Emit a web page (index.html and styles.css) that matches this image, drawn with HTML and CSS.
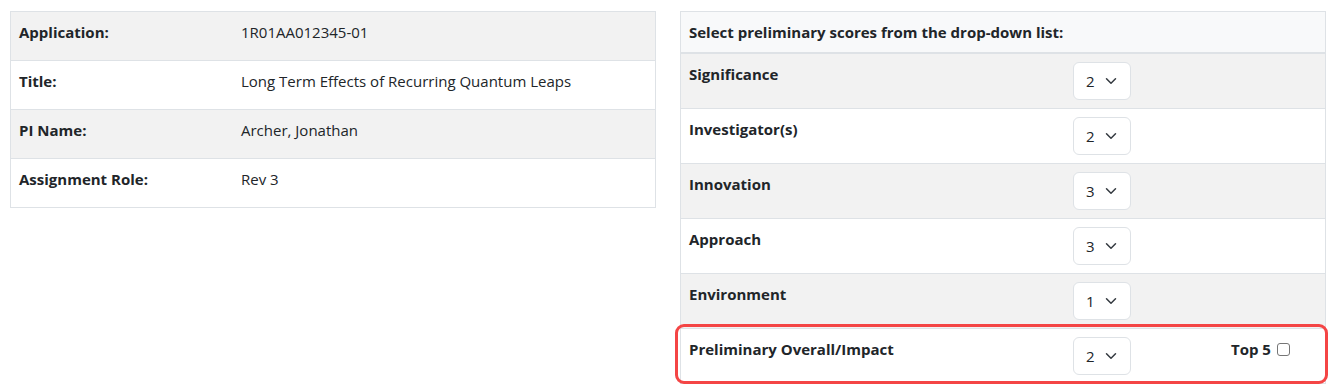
FILE: index.html
```html
<!DOCTYPE html>
<html lang="en">
<head>
<meta charset="utf-8">
<title>Preliminary Scores</title>
<link rel="stylesheet" href="styles.css">
</head>
<body>
<div class="page">
  <section class="info">
    <div class="info-row"><div class="info-label">Application:</div><div class="info-value">1R01AA012345-01</div></div>
    <div class="info-row"><div class="info-label">Title:</div><div class="info-value">Long Term Effects of Recurring Quantum Leaps</div></div>
    <div class="info-row"><div class="info-label">PI Name:</div><div class="info-value">Archer, Jonathan</div></div>
    <div class="info-row"><div class="info-label">Assignment Role:</div><div class="info-value">Rev 3</div></div>
  </section>

  <section class="scores">
    <div class="scores-head">Select preliminary scores from the drop-down list:</div>

    <div class="score-row">
      <div class="score-label">Significance</div>
      <div class="score-cell"><div class="select"><span>2</span><svg class="chev" viewBox="0 0 16 16"><path d="M2 5l6 6 6-6"/></svg></div></div>
      <div class="score-extra"></div>
    </div>

    <div class="score-row">
      <div class="score-label">Investigator(s)</div>
      <div class="score-cell"><div class="select"><span>2</span><svg class="chev" viewBox="0 0 16 16"><path d="M2 5l6 6 6-6"/></svg></div></div>
      <div class="score-extra"></div>
    </div>

    <div class="score-row">
      <div class="score-label">Innovation</div>
      <div class="score-cell"><div class="select"><span>3</span><svg class="chev" viewBox="0 0 16 16"><path d="M2 5l6 6 6-6"/></svg></div></div>
      <div class="score-extra"></div>
    </div>

    <div class="score-row">
      <div class="score-label">Approach</div>
      <div class="score-cell"><div class="select"><span>3</span><svg class="chev" viewBox="0 0 16 16"><path d="M2 5l6 6 6-6"/></svg></div></div>
      <div class="score-extra"></div>
    </div>

    <div class="score-row">
      <div class="score-label">Environment</div>
      <div class="score-cell"><div class="select"><span>1</span><svg class="chev" viewBox="0 0 16 16"><path d="M2 5l6 6 6-6"/></svg></div></div>
      <div class="score-extra"></div>
    </div>

    <div class="score-row overall">
      <div class="score-label">Preliminary Overall/Impact</div>
      <div class="score-cell"><div class="select"><span>2</span><svg class="chev" viewBox="0 0 16 16"><path d="M2 5l6 6 6-6"/></svg></div></div>
      <div class="score-extra"><label class="top5">Top 5<span class="checkbox"></span></label></div>
      <span class="highlight"></span>
    </div>
  </section>
</div>
</body>
</html>
```

FILE: styles.css
```css
html, body {
  margin: 0;
  padding: 0;
  background: #ffffff;
}

body {
  font-family: "Open Sans", "Noto Sans", "Liberation Sans", sans-serif;
  font-size: 15px;
  line-height: 24px;
  color: #212529;
}

.page {
  display: flex;
  align-items: flex-start;
  gap: 24px;
  padding: 11px 10px 0 10px;
}

.info,
.scores {
  flex: 0 0 646px;
  box-sizing: border-box;
  border: 1px solid #dee2e6;
}

/* left info table */
.info-row {
  display: grid;
  grid-template-columns: 222px 1fr;
  border-top: 1px solid #dee2e6;
}

.info-row:first-child {
  border-top: 0;
}

.info-row:nth-child(odd) {
  background: #f2f2f2;
}

.info-label,
.info-value {
  padding: 8px 8px 16px 8px;
}

.info-label {
  font-weight: 700;
}

/* right scores table */
.scores-head {
  padding: 8px;
  font-weight: 700;
  background: #f8f9fa;
  border-bottom: 2px solid #dee2e6;
}

.score-row {
  display: grid;
  grid-template-columns: 384px 158px 1fr;
  border-top: 1px solid #dee2e6;
  background: #ffffff;
}

.scores-head + .score-row {
  border-top: 0;
}

.score-row:nth-child(even) {
  background: #f2f2f2;
}

.score-label,
.score-cell,
.score-extra {
  padding: 8px;
}

.score-label {
  font-weight: 700;
}

.select {
  box-sizing: border-box;
  width: 58px;
  height: 38px;
  display: flex;
  align-items: center;
  justify-content: space-between;
  padding: 0 13px 0 12px;
  background: #ffffff;
  border: 1px solid #dee2e6;
  border-radius: 6px;
  color: #212529;
}

.chev {
  width: 12px;
  height: 12px;
  fill: none;
  stroke: #343a40;
  stroke-width: 2;
  stroke-linecap: round;
  stroke-linejoin: round;
}

.top5 {
  font-weight: 700;
  white-space: nowrap;
}

.checkbox {
  display: inline-block;
  box-sizing: border-box;
  width: 13px;
  height: 13px;
  margin-left: 6px;
  vertical-align: -1px;
  border: 1px solid #767676;
  border-radius: 3px;
  background: #ffffff;
}

.overall {
  position: relative;
}

.highlight {
  position: absolute;
  top: -5px;
  left: -6px;
  right: -3px;
  bottom: -1px;
  border: 3px solid #f44545;
  border-radius: 9px;
  pointer-events: none;
}
```
